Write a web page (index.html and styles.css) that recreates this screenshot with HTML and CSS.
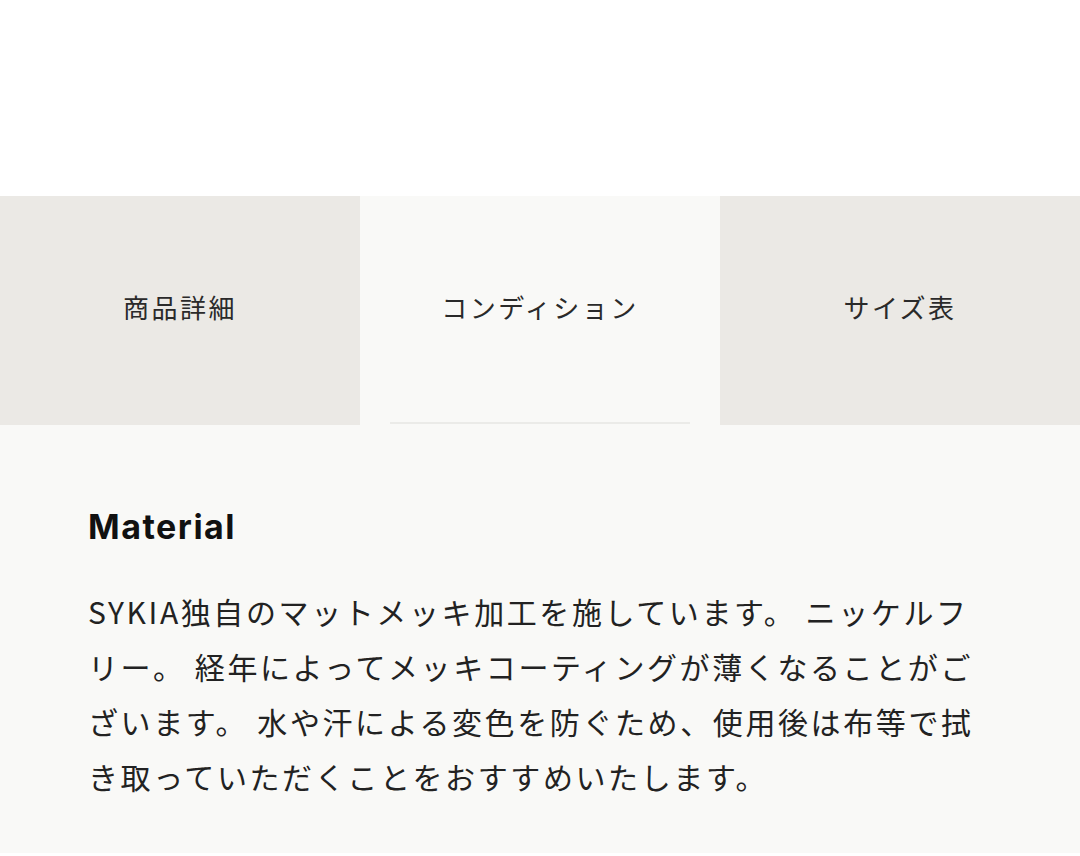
FILE: index.html
```html
<!DOCTYPE html>
<html lang="ja">
<head>
<meta charset="utf-8">
<link rel="stylesheet" href="styles.css">
</head>
<body>

<div class="top-space"></div>

<div class="tabs">
    <div class="tab">商品詳細</div>
    <div class="tab active">コンディション</div>
    <div class="tab">サイズ表</div>
</div>

<div class="panel">
    <h2 class="panel-title">Material</h2>
    <p class="panel-text">SYKIA独自のマットメッキ加工を施しています。 ニッケルフ<br>リー。 経年によってメッキコーティングが薄くなることがご<br>ざいます。 水や汗による変色を防ぐため、使用後は布等で拭<br>き取っていただくことをおすすめいたします。</p>
</div>

</body>
</html>
```

FILE: styles.css
```css
body {
    margin: 0;
    background-color: #fff;
    font-family: "Noto Sans CJK JP", "Noto Sans", sans-serif;
    color: #222;
}

.top-space {
    height: 196px;
}

.tabs {
    display: grid;
    grid-template-columns: 1fr 1fr 1fr;
    height: 229px;
}

.tab {
    display: flex;
    align-items: center;
    justify-content: center;
    background-color: #ebe9e5;
    font-size: 26px;
    letter-spacing: 2.5px;
    color: #2a2a2a;
    padding-bottom: 8px;
}

.tab.active {
    position: relative;
    background-color: #f9f9f7;
}

.tab.active::after {
    content: "";
    position: absolute;
    left: 30px;
    right: 30px;
    bottom: 1px;
    height: 2px;
    background-color: #ebebe8;
}

.panel {
    background-color: #f9f9f7;
    padding: 82px 88px 37px;
    height: 309px;
}

.panel-title {
    margin: 0 0 37px;
    font-family: Inter, "Noto Sans", sans-serif;
    font-weight: 700;
    font-size: 34px;
    letter-spacing: 1.5px;
    line-height: 40px;
    color: #111;
}

.panel-text {
    margin: 0;
    font-size: 30px;
    line-height: 55px;
    letter-spacing: 2.6px;
    color: #222;
    white-space: nowrap;
}
```
